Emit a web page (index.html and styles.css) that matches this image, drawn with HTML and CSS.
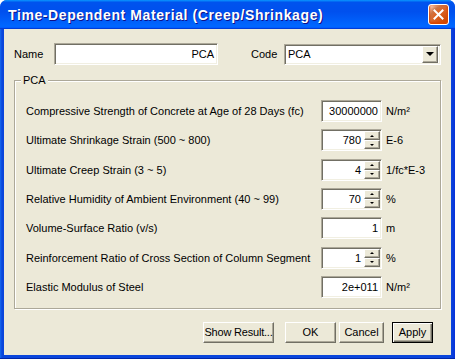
FILE: index.html
```html
<!DOCTYPE html>
<html lang="en">
<head>
  <meta charset="UTF-8" />
  <title>Time-Dependent Material (Creep/Shrinkage)</title>
  <link rel="stylesheet" href="styles.css">
</head>
<body>

<div class="window">
  <div class="titlebar">
    <span class="title">Time-Dependent Material (Creep/Shrinkage)</span>
    <div class="close">
      <svg width="11" height="11" viewBox="0 0 11 11">
        <path d="M1.5 1.5 L9.5 9.5 M9.5 1.5 L1.5 9.5" stroke="#fff" stroke-width="2" stroke-linecap="square" fill="none"/>
      </svg>
    </div>
  </div>

  <div class="client">
    <div class="top-row">
      <label class="lbl-name">Name</label>
      <div class="edit name-edit">PCA</div>
      <label class="lbl-code">Code</label>
      <div class="edit combo">
        <span class="combo-text">PCA</span>
        <div class="drop"><i class="arrow-down"></i></div>
      </div>
    </div>

    <fieldset class="group">
      <legend>PCA</legend>
      <div class="grid">
        <span>Compressive Strength of Concrete at Age of 28 Days (fc)</span>
        <div class="edit val"><span class="num">30000000</span></div>
        <span class="unit">N/m²</span>

        <span>Ultimate Shrinkage Strain (500 ~ 800)</span>
        <div class="edit val"><span class="num">780</span><div class="spin"><i class="up"></i><i class="down"></i></div></div>
        <span class="unit">E-6</span>

        <span>Ultimate Creep Strain (3 ~ 5)</span>
        <div class="edit val"><span class="num">4</span><div class="spin"><i class="up"></i><i class="down"></i></div></div>
        <span class="unit">1/fc*E-3</span>

        <span>Relative Humidity of Ambient Environment (40 ~ 99)</span>
        <div class="edit val"><span class="num">70</span><div class="spin"><i class="up"></i><i class="down"></i></div></div>
        <span class="unit">%</span>

        <span>Volume-Surface Ratio (v/s)</span>
        <div class="edit val"><span class="num">1</span></div>
        <span class="unit">m</span>

        <span>Reinforcement Ratio of Cross Section of Column Segment</span>
        <div class="edit val"><span class="num">1</span><div class="spin"><i class="up"></i><i class="down"></i></div></div>
        <span class="unit">%</span>

        <span>Elastic Modulus of Steel</span>
        <div class="edit val"><span class="num">2e+011</span></div>
        <span class="unit">N/m²</span>
      </div>
    </fieldset>

    <div class="buttons">
      <button class="btn btn-show">Show Result...</button>
      <button class="btn btn-ok">OK</button>
      <button class="btn btn-cancel">Cancel</button>
      <button class="btn btn-apply">Apply</button>
    </div>
  </div>
</div>

</body>
</html>
```

FILE: styles.css
```css
* {
  box-sizing: border-box;
}

body {
  margin: 0;
  background: #ffffff;
  font-family: "Liberation Sans", Arial, sans-serif;
  font-size: 11px;
  color: #000;
}

.window {
  width: 455px;
  height: 359px;
  display: flex;
  flex-direction: column;
  background: linear-gradient(90deg, #166aee 0, #0a46dc 2px, #0a46dc 451px, #0831d9 455px);
  border-radius: 7px 7px 0 0;
  overflow: hidden;
  border-bottom: 1px solid #0026a8;
}

.titlebar {
  height: 29px;
  flex: none;
  display: flex;
  align-items: center;
  justify-content: space-between;
  padding: 0 6px 0 8px;
  background: linear-gradient(180deg, #0997ff, #0053ee 8%, #0050ee 40%, #0066ff 88%, #0066ff 93%, #005bff 95%, #003dd7 96%, #003dd7);
}

.title {
  color: #fff;
  font-weight: bold;
  font-size: 14px;
  letter-spacing: 0.6px;
  text-shadow: 1px 1px #0f1089;
}

.close {
  width: 21px;
  height: 21px;
  border: 1px solid #fff;
  border-radius: 3px;
  background: radial-gradient(circle at 90% 90%, #cc4600 0, #dc6527 55%, #cd7546 70%, #ffccb2 90%, #fff 100%);
  box-shadow: inset 0 -1px 2px 1px #da4600;
  display: flex;
  align-items: center;
  justify-content: center;
}

.client {
  flex: 1;
  margin: 0 4px 3px 4px;
  background: #ece9d8;
  padding-top: 14px;
}

/* sunken edit frame */
.edit {
  display: flex;
  align-items: center;
  background: #fff;
  border: 1px solid;
  border-color: #aca899 #fff #fff #aca899;
  box-shadow: inset 1px 1px #716f64, inset -1px -1px #f1efe2;
}

.top-row {
  display: flex;
  align-items: center;
  padding-left: 10px;
}

.lbl-name {
  width: 40px;
}

.name-edit {
  width: 164px;
  height: 22px;
  justify-content: flex-end;
  padding-right: 3px;
}

.lbl-code {
  margin-left: 33px;
  width: 33px;
}

.combo {
  width: 157px;
  height: 21px;
  justify-content: space-between;
  padding: 0 2px 0 3px;
}

.drop {
  width: 16px;
  height: 17px;
  background: #ece9d8;
  border: 1px solid;
  border-color: #fff #716f64 #716f64 #fff;
  box-shadow: inset -1px -1px #aca899;
  display: flex;
  align-items: center;
  justify-content: center;
}

.arrow-down {
  border-left: 4px solid transparent;
  border-right: 4px solid transparent;
  border-top: 4px solid #000;
}

.group {
  margin: 9px 10px 0 10px;
  padding: 13px 0 10px 11px;
  border: 1px solid #aca899;
  box-shadow: 1px 1px 0 #fff, inset 1px 1px 0 #fff;
  min-width: 0;
}

.group legend {
  margin-left: -5px;
  padding: 0 2px;
  line-height: 13px;
  background: #ece9d8;
}

.grid {
  display: grid;
  grid-template-columns: 295px 61px auto;
  grid-auto-rows: 22px;
  row-gap: 7.33px;
  align-items: center;
}

.val {
  height: 22px;
  justify-content: flex-end;
}

.num {
  padding-right: 3px;
}

.unit {
  padding-left: 4px;
}

.spin {
  display: flex;
  flex-direction: column;
  width: 16px;
  align-self: stretch;
  margin: 1px 1px 1px 0;
}

.spin i {
  flex: 1;
  background: #ece9d8;
  border: 1px solid;
  border-color: #fff #716f64 #716f64 #fff;
  box-shadow: inset -1px -1px #aca899;
  display: flex;
  align-items: center;
  justify-content: center;
}

.spin .up::after {
  content: "";
  border-left: 2px solid transparent;
  border-right: 2px solid transparent;
  border-bottom: 2px solid #000;
}

.spin .down::after {
  content: "";
  border-left: 2px solid transparent;
  border-right: 2px solid transparent;
  border-top: 2px solid #000;
}

.buttons {
  display: flex;
  justify-content: flex-end;
  margin-top: 13px;
  padding-right: 18px;
}

.btn {
  height: 21px;
  padding: 0;
  font: inherit;
  color: #000;
  white-space: nowrap;
  background: #ece9d8;
  border: 1px solid;
  border-color: #fff #716f64 #716f64 #fff;
  box-shadow: inset -1px -1px #aca899;
}

.btn-show {
  width: 71px;
  margin-right: 11px;
  letter-spacing: -0.2px;
}

.btn-ok {
  width: 51px;
  margin-right: 3px;
}

.btn-cancel {
  width: 45px;
  margin-right: 8px;
}

.btn-apply {
  width: 41px;
  border-color: #000;
  box-shadow: inset 1px 1px #fff, inset -1px -1px #716f64, inset -2px -2px #aca899;
}
```
